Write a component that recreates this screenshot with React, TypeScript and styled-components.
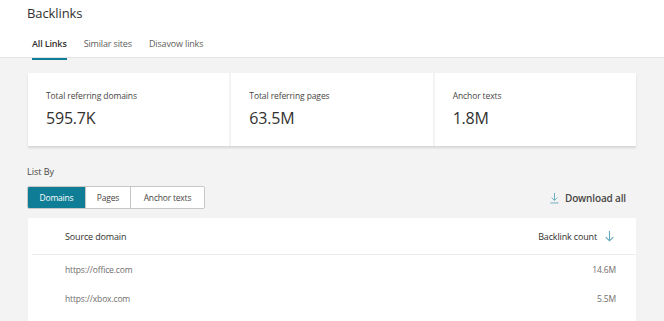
import styled, { createGlobalStyle } from 'styled-components';

const TEAL = '#0f7d96';

const GlobalStyle = createGlobalStyle`
  html, body {
    margin: 0;
    padding: 0;
    background: #f3f3f3;
    font-family: 'Open Sans', 'Noto Sans', sans-serif;
    color: #323130;
  }
`;

const stats = [
  { label: 'Total referring domains', value: '595.7K' },
  { label: 'Total referring pages', value: '63.5M' },
  { label: 'Anchor texts', value: '1.8M' },
];

const segments = [
  { label: 'Domains', width: 57 },
  { label: 'Pages', width: 45 },
  { label: 'Anchor texts', width: 74 },
];

const rows = [
  { domain: 'https://office.com', count: '14.6M' },
  { domain: 'https://xbox.com', count: '5.5M' },
];

const ArrowDown = ({ size = 12 }: { size?: number }) => (
  <svg width={size} height={size} viewBox="0 0 12 12" fill="none">
    <path d="M6 1v9M2.5 6.5L6 10l3.5-3.5" stroke="#5fa8bb" strokeWidth="1" />
  </svg>
);

const DownloadIcon = () => (
  <svg width="9" height="12" viewBox="0 0 10 12" fill="none">
    <path d="M5 0.5v8M1.8 5.5L5 8.7l3.2-3.2M0.5 11.5h9" stroke="#5fa8bb" strokeWidth="1" />
  </svg>
);

export default function App() {
  return (
    <Page>
      <GlobalStyle />
      <Header>
        <Title>Backlinks</Title>
        <Tabs>
          <Tab $active>All Links</Tab>
          <Tab>Similar sites</Tab>
          <Tab>Disavow links</Tab>
        </Tabs>
      </Header>
      <Body>
        <StatsRow>
          {stats.map((s) => (
            <StatCard key={s.label}>
              <StatLabel>{s.label}</StatLabel>
              <StatValue>{s.value}</StatValue>
            </StatCard>
          ))}
        </StatsRow>

        <ListBy>List By</ListBy>
        <Toolbar>
          <Segments>
            {segments.map((s, i) => (
              <Segment key={s.label} $active={i === 0} $width={s.width}>
                {s.label}
              </Segment>
            ))}
          </Segments>
          <Download>
            <DownloadIcon />
            Download all
          </Download>
        </Toolbar>

        <Table>
          <HeadRow>
            <HeadCell>Source domain</HeadCell>
            <HeadCell>
              Backlink count
              <ArrowDown size={13} />
            </HeadCell>
          </HeadRow>
          {rows.map((r) => (
            <Row key={r.domain}>
              <Cell>{r.domain}</Cell>
              <Cell>{r.count}</Cell>
            </Row>
          ))}
        </Table>
      </Body>
    </Page>
  );
}

const Page = styled.div`
  width: 664px;
  height: 321px;
  overflow: hidden;
  background: #f3f3f3;
`;

const Header = styled.div`
  background: #fff;
  border-bottom: 1px solid #e4e4e4;
  padding: 4px 0 0 27px;
  height: 53px;
`;

const Title = styled.div`
  font-size: 13px;
  line-height: 18px;
  color: #323130;
  letter-spacing: -0.1px;
`;

const Tabs = styled.div`
  display: flex;
  gap: 17px;
  margin-top: 15px;
  padding-left: 5px;
`;

const Tab = styled.div<{ $active?: boolean }>`
  font-size: 9px;
  line-height: 14px;
  padding-bottom: 7px;
  color: ${(p) => (p.$active ? '#323130' : '#605e5c')};
  font-weight: ${(p) => (p.$active ? 600 : 400)};
  border-bottom: 2px solid ${(p) => (p.$active ? TEAL : 'transparent')};
  letter-spacing: -0.15px;
`;

const Body = styled.div`
  padding: 15px 28px 0 28px;
`;

const StatsRow = styled.div`
  display: grid;
  grid-template-columns: 1fr 1fr 1fr;
  gap: 2px;
  box-shadow: 0 1.5px 2px rgba(0, 0, 0, 0.12);
`;

const StatCard = styled.div`
  background: #fff;
  height: 73px;
  padding: 17px 0 0 18px;
  box-sizing: border-box;
`;

const StatLabel = styled.div`
  font-size: 8.5px;
  line-height: 12px;
  color: #484644;
  letter-spacing: -0.1px;
`;

const StatValue = styled.div`
  font-size: 16px;
  line-height: 20px;
  margin-top: 6px;
  color: #323130;
  letter-spacing: -0.2px;
`;

const ListBy = styled.div`
  font-size: 9px;
  line-height: 12px;
  color: #484644;
  margin-top: 20px;
  margin-left: -1px;
`;

const Toolbar = styled.div`
  display: flex;
  align-items: center;
  justify-content: space-between;
  margin-top: 8px;
  margin-left: -1px;
`;

const Segments = styled.div`
  display: flex;
  border: 1px solid #c8c6c4;
  border-radius: 2px;
  overflow: hidden;
  height: 21px;
  background: #fff;
`;

const Segment = styled.div<{ $active?: boolean; $width: number }>`
  display: flex;
  align-items: center;
  justify-content: center;
  width: ${(p) => p.$width}px;
  box-sizing: border-box;
  font-size: 8.5px;
  letter-spacing: -0.2px;
  color: ${(p) => (p.$active ? '#fff' : '#484644')};
  background: ${(p) => (p.$active ? TEAL : '#fff')};
  & + & {
    border-left: 1px solid #c8c6c4;
  }
`;

const Download = styled.div`
  display: flex;
  align-items: center;
  gap: 6px;
  font-size: 10px;
  font-weight: 600;
  color: #484644;
  margin-right: 10px;
  margin-top: 1px;
  letter-spacing: -0.15px;
`;

const Table = styled.div`
  background: #fff;
  margin-top: 9px;
  height: 120px;
`;

const HeadRow = styled.div`
  display: flex;
  justify-content: space-between;
  align-items: center;
  height: 36px;
  margin-left: 4px;
  padding: 0 20px 0 33px;
  border-bottom: 1px solid #edebe9;
`;

const HeadCell = styled.div`
  display: flex;
  align-items: center;
  gap: 6px;
  font-size: 9px;
  color: #323130;
  letter-spacing: -0.15px;
`;

const Row = styled.div`
  display: flex;
  justify-content: space-between;
  align-items: center;
  height: 29px;
  padding: 0 20px 0 37px;
`;

const Cell = styled.div`
  font-size: 8.5px;
  color: #706e6c;
  letter-spacing: -0.15px;
`;
